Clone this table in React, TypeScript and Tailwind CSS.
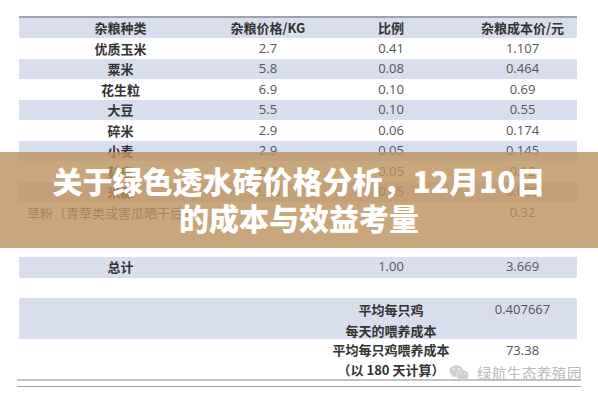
import { FaWeixin } from "react-icons/fa";

const rows = [
  ["优质玉米", "2.7", "0.41", "1.107"],
  ["粟米", "5.8", "0.08", "0.464"],
  ["花生粒", "6.9", "0.10", "0.69"],
  ["大豆", "5.5", "0.10", "0.55"],
  ["碎米", "2.9", "0.06", "0.174"],
  ["小麦", "2.9", "0.05", "0.145"],
  ["麸皮", "2.4", "0.05", "0.12"],
  ["米糠", "1.98", "0.05", "0.099"],
  ["草粉（青草类或害瓜晒干后）", "3.2", "0.10", "0.32"],
];

const cjk = "font-['Noto_Sans_CJK_SC',sans-serif]";
const num = "font-['Open_Sans','Noto_Sans_CJK_SC',sans-serif] text-[13px] text-[#555]";
const cols = "grid grid-cols-[203px_92px_154px_109px] items-center text-center";

export default function App() {
  return (
    <div className="relative w-[598px] h-[400px] overflow-hidden bg-white">
      <div className="pt-4 pl-[19px] w-[577px]">
        <div className="border-t-2 border-[#9ea3ab]">
          <div className={`${cols} h-5 bg-[#d8deee] ${cjk} text-[13px] font-bold text-[#333]`}>
            <span>杂粮种类</span>
            <span>杂粮价格/KG</span>
            <span>比例</span>
            <span>杂粮成本价/元</span>
          </div>
          {rows.map((r, i) => (
            <div
              key={r[0]}
              className={`${cols} h-[20.5px] ${i % 2 === 1 ? "bg-[#d8deee]" : "bg-white"}`}
            >
              <span
                className={`${cjk} text-[13px] font-bold text-[#333] whitespace-nowrap ${
                  i === 8 ? "text-left pl-2 font-normal text-[#555]" : ""
                }`}
              >
                {r[0]}
              </span>
              <span className={num}>{i === 8 ? "" : r[1]}</span>
              <span className={num}>{i === 8 ? "" : r[2]}</span>
              <span className={num}>{r[3]}</span>
            </div>
          ))}
        </div>

        <div className={`${cols} h-[21px] mt-[34px] bg-[#d8deee]`}>
          <span className={`${cjk} text-[13px] font-bold text-[#333]`}>总计</span>
          <span />
          <span className={num}>1.00</span>
          <span className={num}>3.669</span>
        </div>

        <div className="h-5" />

        <div className={`${cols} h-[41px] bg-[#d8deee] items-start pt-[1px]`}>
          <span />
          <span />
          <span className={`${cjk} text-[13px] font-bold text-[#333] leading-[21px]`}>
            平均每只鸡
            <br />
            每天的喂养成本
          </span>
          <span className={`${num} leading-[21px]`}>0.407667</span>
        </div>

        <div className={`${cols} h-10 items-start pt-[1px]`}>
          <span />
          <span />
          <span className={`${cjk} text-[13px] font-bold text-[#333] leading-[20px] whitespace-nowrap`}>
            平均每只鸡喂养成本
            <br />
            （以 180 天计算）
          </span>
          <span className={`${num} leading-[20px]`}>73.38</span>
        </div>

        <div className="-ml-[2px] w-[564px] h-[2px] bg-[#c4c4c4]" />
        <div className="-ml-[2px] mt-[5px] w-[564px] h-px bg-[#a8a8a8]" />
      </div>

      <div className="absolute right-[16px] top-[362px] flex items-center gap-2 text-[#b9b9b9]">
        <FaWeixin className="w-5 h-5 text-[#cfcfcf]" />
        <span className={`${cjk} text-[14.5px] tracking-[0.5px]`}>绿航生态养殖园</span>
      </div>

      <div className="absolute left-0 right-0 top-[152px] h-[96px] bg-[rgba(189,144,91,0.8)] flex flex-col items-center justify-center">
        <p
          className={`${cjk} text-white font-black text-[30px] leading-[37px] text-center pb-[2px]`}
        >
          关于绿色透水砖价格分析，12月10日
          <br />
          的成本与效益考量
        </p>
      </div>
    </div>
  );
}
